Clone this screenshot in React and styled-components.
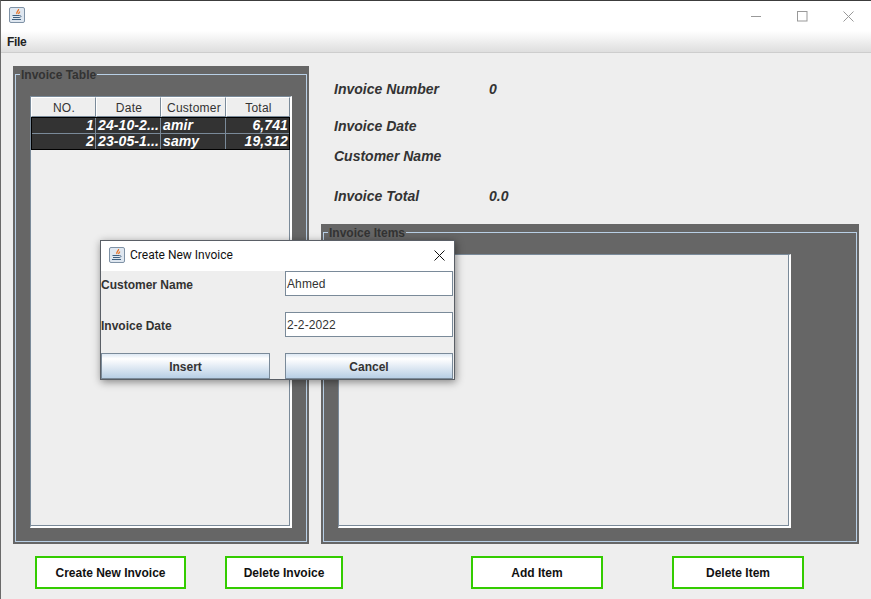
import styled, { createGlobalStyle } from 'styled-components'

const GlobalStyle = createGlobalStyle`
  html, body {
    margin: 0;
    padding: 0;
    background: #eeeeee;
  }
  * {
    box-sizing: border-box;
  }
`

const Frame = styled.div`
  position: relative;
  display: flex;
  flex-direction: column;
  width: 871px;
  height: 599px;
  overflow: hidden;
  background: #eeeeee;
  border-top: 1px solid #3c3c3c;
  border-left: 1px solid #6a6a6a;
  font-family: "Liberation Sans", Arial, sans-serif;
`
const TitleBar = styled.div`
  display: flex;
  align-items: center;
  justify-content: space-between;
  height: 30px;
  background: #ffffff;
  padding: 0 0 0 8px;
`
const AppIcon = styled.div`
  display: flex;
  margin-bottom: 2px;
`
const WindowButtons = styled.div`
  display: flex;
  align-items: center;
`
const WindowButton = styled.div`
  display: flex;
  align-items: center;
  justify-content: center;
  width: 46px;
  height: 30px;
`
const MenuBar = styled.div`
  display: flex;
  align-items: center;
  height: 22px;
  padding-left: 6px;
  background: linear-gradient(#ffffff, #dedede);
  border-bottom: 1px solid #cdcdcd;
  font-size: 12px;
  font-weight: bold;
  letter-spacing: -0.3px;
  color: #222222;
`
const Body = styled.div`
  display: flex;
  gap: 12px;
  height: 491px;
  padding: 13px 0 0 12px;
`
const TablePanel = styled.div`
  width: 296px;
  height: 478px;
  background: #666666;
  padding: 1px 2px 2px;
`
const ItemsColumn = styled.div`
  display: flex;
  flex-direction: column;
  width: 538px;
`
const Titled = styled.fieldset`
  height: 100%;
  margin: 0;
  padding: 0;
  border: 1px solid #b8cfe5;
  background: #666666;
  min-width: 0;
`
const Legend = styled.legend`
  margin-left: 4px;
  padding: 1px 1px 0;
  font-size: 12px;
  font-weight: bold;
  line-height: 14px;
  color: #333333;
`
const ScrollPane = styled.div`
  width: ${p => p.$width}px;
  height: ${p => p.$height}px;
  margin: 14px 0 0 14px;
  background: #eeeeee;
  border-top: 1px solid #7a8a99;
  border-left: 1px solid #7a8a99;
  border-right: 2px solid #ffffff;
  border-bottom: 2px solid #ffffff;
  box-shadow: inset -1px -1px 0 #7a8a99;
`
const HeaderRow = styled.div`
  display: grid;
  grid-template-columns: 65px 65px 65px 64px;
  height: 20px;
`
const HeaderCell = styled.div`
  display: flex;
  align-items: center;
  justify-content: center;
  padding: 1px 0 0 1px;
  font-size: 12px;
  letter-spacing: 0.25px;
  color: #333333;
  background: #eeeeee;
  border-top: 1px solid #ffffff;
  border-left: 1px solid #ffffff;
  border-right: 1px solid #7a8a99;
  border-bottom: 1px solid #7a8a99;
`
const RowsBox = styled.div`
  width: 259px;
  border: 1px solid #000000;
`
const Row = styled.div`
  display: grid;
  grid-template-columns: 64px 65px 65px 63px;
  height: 15px;
  background: #333333;
  & + & {
    height: 16px;
    border-top: 1px solid #7a8a99;
  }
`
const Cell = styled.div`
  padding: 0 1px 0 2px;
  overflow: hidden;
  white-space: nowrap;
  font-size: 14px;
  line-height: 14px;
  font-weight: bold;
  font-style: italic;
  letter-spacing: 0.1px;
  color: #ffffff;
  text-align: ${p => (p.$right ? 'right' : 'left')};
  border-right: 1px solid #7a8a99;
  &:last-child {
    border-right: none;
  }
`
const InfoBlock = styled.div`
  display: flex;
  flex-direction: column;
  height: 158px;
  padding: 14px 0 0 13px;
`
const InfoRow = styled.div`
  display: flex;
  align-items: center;
  height: 18px;
  margin-bottom: ${p => p.$gap}px;
  font-size: 14px;
  font-weight: bold;
  font-style: italic;
  color: #333333;
`
const InfoLabel = styled.div`
  width: 155px;
`
const ItemsPanel = styled.div`
  height: 320px;
  background: #666666;
  padding: 1px 2px 2px;
`
const ButtonBar = styled.div`
  display: flex;
  height: 33px;
  margin-top: 12px;
  padding-left: 34px;
`
const ActionButton = styled.div`
  display: flex;
  align-items: center;
  justify-content: center;
  width: ${p => p.$width}px;
  margin-right: ${p => p.$gap}px;
  background: #ffffff;
  border: 2px solid #33cc00;
  font-size: 12px;
  font-weight: bold;
  color: #111111;
`
const Dialog = styled.div`
  position: absolute;
  left: 99px;
  top: 239px;
  width: 355px;
  height: 140px;
  display: flex;
  flex-direction: column;
  background: #eeeeee;
  border: 1px solid #5a5f66;
  box-shadow: 1px 2px 8px rgba(0, 0, 0, 0.45);
`
const DialogTitle = styled.div`
  display: flex;
  align-items: center;
  gap: 5px;
  height: 30px;
  padding: 0 9px 2px 8px;
  background: #ffffff;
  font-family: Roboto, "Noto Sans", sans-serif;
  font-size: 12px;
  color: #111111;
`
const DialogName = styled.div`
  flex: 1;
`
const DialogBody = styled.div`
  display: grid;
  grid-template-columns: 169px 168px;
  column-gap: 15px;
  grid-template-rows: 25px 25px 26px;
  row-gap: 16px;
  align-items: center;
`
const FieldLabel = styled.div`
  padding-top: 2px;
  font-size: 12px;
  font-weight: bold;
  color: #333333;
`
const TextField = styled.div`
  display: flex;
  align-items: center;
  height: 25px;
  padding: 1px 0 0 1px;
  background: #ffffff;
  border: 1px solid #7a8a99;
  font-size: 12px;
  letter-spacing: 0.1px;
  color: #333333;
`
const DialogButton = styled.div`
  display: flex;
  align-items: center;
  justify-content: center;
  height: 26px;
  padding-top: 2px;
  border: 1px solid #7a8a99;
  background: linear-gradient(#dde8f3, #ffffff 20%, #b8cfe5);
  font-size: 12px;
  font-weight: bold;
  color: #333333;
`

const JavaIcon = () => (
  <svg width="16" height="16" viewBox="0 0 16 16">
    <rect x="0.5" y="0.5" width="15" height="15" rx="1.5" fill="#dfe7f0" stroke="#7f92a6" />
    <path d="M9.5 2c.8 1.6-2.6 2.6-1.6 5M10.5 4.5c.5 1-1.2 1.4-.8 2.5" fill="none" stroke="#e8742a" strokeWidth="1.3" />
    <path d="M3.5 8.5h7M4 10.5h6.5M3 12.5h9" fill="none" stroke="#3f5f80" strokeWidth="1" />
    <path d="M10.5 8.5c2.4 0 1.8 2-.5 2" fill="none" stroke="#3f5f80" strokeWidth="0.8" />
  </svg>
)

const rows = [
  ['1', '24-10-2...', 'amir', '6,741'],
  ['2', '23-05-1...', 'samy', '19,312'],
]

const App = () => {
  return (
    <>
      <GlobalStyle />
      <Frame>
        <TitleBar>
          <AppIcon>
            <JavaIcon />
          </AppIcon>
          <WindowButtons>
            <WindowButton>
              <svg width="11" height="11" viewBox="0 0 11 11">
                <path d="M0 5.5h10" stroke="#999999" strokeWidth="1" />
              </svg>
            </WindowButton>
            <WindowButton>
              <svg width="11" height="11" viewBox="0 0 11 11">
                <rect x="0.5" y="0.5" width="9.5" height="9.5" fill="none" stroke="#999999" />
              </svg>
            </WindowButton>
            <WindowButton>
              <svg width="11" height="11" viewBox="0 0 11 11">
                <path d="M0.5 0.5l10 10M10.5 0.5l-10 10" stroke="#999999" strokeWidth="1" />
              </svg>
            </WindowButton>
          </WindowButtons>
        </TitleBar>
        <MenuBar>File</MenuBar>
        <Body>
          <TablePanel>
            <Titled>
              <Legend>Invoice Table</Legend>
              <ScrollPane $width={262} $height={432}>
                <HeaderRow>
                  <HeaderCell>NO.</HeaderCell>
                  <HeaderCell>Date</HeaderCell>
                  <HeaderCell>Customer</HeaderCell>
                  <HeaderCell>Total</HeaderCell>
                </HeaderRow>
                <RowsBox>
                  {rows.map((r, i) => (
                    <Row key={i}>
                      <Cell $right>{r[0]}</Cell>
                      <Cell>{r[1]}</Cell>
                      <Cell>{r[2]}</Cell>
                      <Cell $right>{r[3]}</Cell>
                    </Row>
                  ))}
                </RowsBox>
              </ScrollPane>
            </Titled>
          </TablePanel>
          <ItemsColumn>
            <InfoBlock>
              <InfoRow $gap={19}>
                <InfoLabel>Invoice Number</InfoLabel>
                <div>0</div>
              </InfoRow>
              <InfoRow $gap={12}>
                <InfoLabel>Invoice Date</InfoLabel>
              </InfoRow>
              <InfoRow $gap={22}>
                <InfoLabel>Customer Name</InfoLabel>
              </InfoRow>
              <InfoRow $gap={0}>
                <InfoLabel>Invoice Total</InfoLabel>
                <div>0.0</div>
              </InfoRow>
            </InfoBlock>
            <ItemsPanel>
              <Titled>
                <Legend>Invoice Items</Legend>
                <ScrollPane $width={453} $height={274} />
              </Titled>
            </ItemsPanel>
          </ItemsColumn>
        </Body>
        <ButtonBar>
          <ActionButton $width={151} $gap={39}>Create New Invoice</ActionButton>
          <ActionButton $width={118} $gap={128}>Delete Invoice</ActionButton>
          <ActionButton $width={132} $gap={69}>Add Item</ActionButton>
          <ActionButton $width={132} $gap={0}>Delete Item</ActionButton>
        </ButtonBar>
        <Dialog>
          <DialogTitle>
            <JavaIcon />
            <DialogName>Create New Invoice</DialogName>
            <svg width="11" height="11" viewBox="0 0 11 11">
              <path d="M0.5 0.5l10 10M10.5 0.5l-10 10" stroke="#111111" strokeWidth="1" />
            </svg>
          </DialogTitle>
          <DialogBody>
            <FieldLabel>Customer Name</FieldLabel>
            <TextField>Ahmed</TextField>
            <FieldLabel>Invoice Date</FieldLabel>
            <TextField>2-2-2022</TextField>
            <DialogButton>Insert</DialogButton>
            <DialogButton>Cancel</DialogButton>
          </DialogBody>
        </Dialog>
      </Frame>
    </>
  )
}

export default App
